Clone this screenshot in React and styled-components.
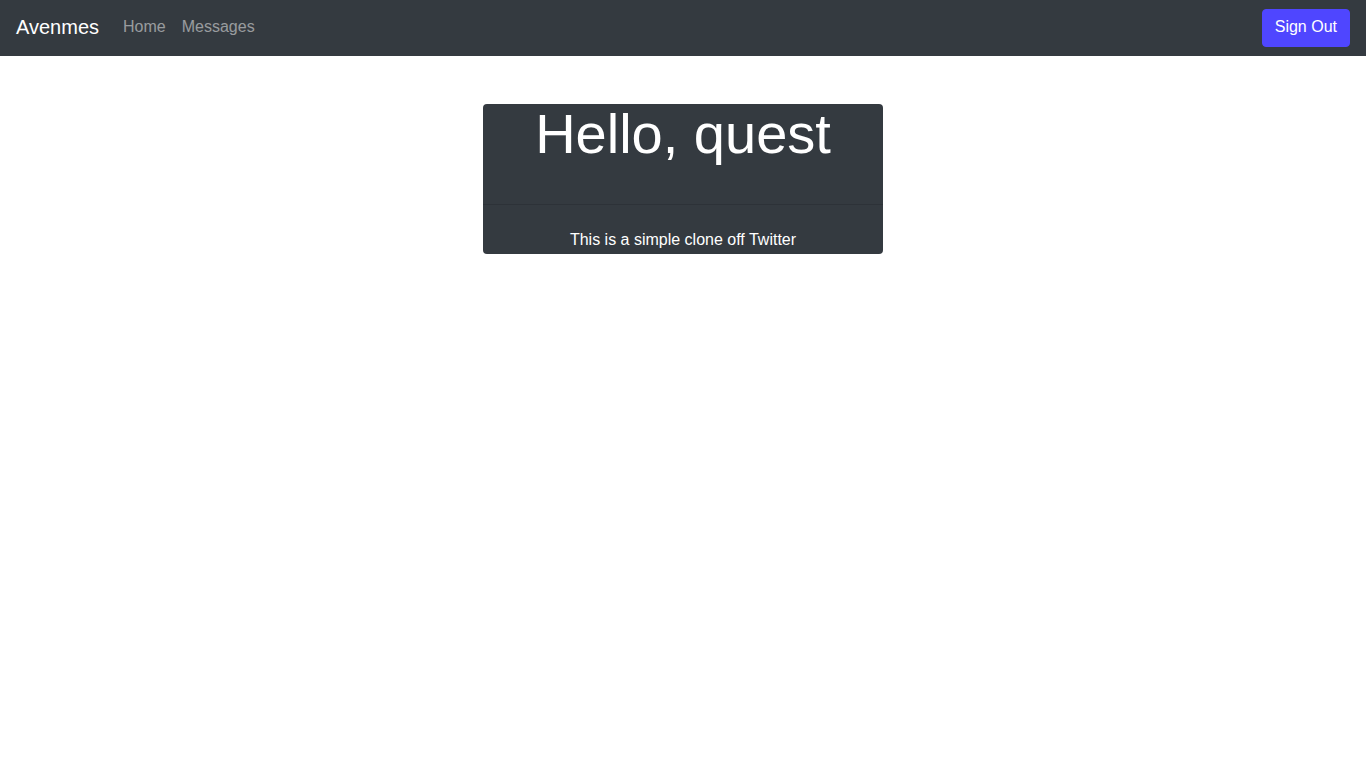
import React from 'react';
import styled, { createGlobalStyle } from 'styled-components';

const GlobalStyle = createGlobalStyle`
  body {
    margin: 0;
    font-family: "Liberation Sans", Arial, sans-serif;
    font-size: 16px;
    line-height: 1.5;
    color: #212529;
    background: #fff;
  }
  * { box-sizing: border-box; }
`;

const Navbar = styled.nav`
  height: 56px;
  padding: 0 16px;
  background-color: #343a40;
  display: flex;
  align-items: center;
`;

const Brand = styled.a`
  font-size: 20px;
  line-height: 30px;
  color: #fff;
  margin: 0 16px 2px 0;
  text-decoration: none;
`;

const NavLinks = styled.div`
  display: flex;
  flex: 1;
  margin-bottom: 2px;
`;

const NavLink = styled.a`
  padding: 8px;
  color: rgba(255, 255, 255, 0.5);
  text-decoration: none;
`;

const Button = styled.button`
  font-family: inherit;
  font-size: 16px;
  line-height: 24px;
  padding: 5px 12px 7px;
  border: 1px solid #4f46ff;
  border-radius: 4px;
  background-color: #4f46ff;
  color: #fff;
`;

const Card = styled.div`
  width: 400px;
  height: 150px;
  margin: 48px auto 0;
  background-color: #343a40;
  border-radius: 4px;
  color: #fff;
  text-align: center;
  display: flex;
  flex-direction: column;
`;

const CardHeader = styled.div`
  height: 101px;
  padding: 0 20px;
  border-bottom: 1px solid rgba(0, 0, 0, 0.125);
`;

const Title = styled.h1`
  margin: 0;
  font-size: 56px;
  font-weight: 400;
  line-height: 59px;
`;

const CardBody = styled.div`
  flex: 1;
  padding: 23px 20px 0;
`;

export default function App() {
  return (
    <>
      <GlobalStyle />
      <Navbar>
        <Brand href="#">Avenmes</Brand>
        <NavLinks>
          <NavLink href="#">Home</NavLink>
          <NavLink href="#">Messages</NavLink>
        </NavLinks>
        <Button>Sign Out</Button>
      </Navbar>
      <Card>
        <CardHeader>
          <Title>Hello, quest</Title>
        </CardHeader>
        <CardBody>This is a simple clone off Twitter</CardBody>
      </Card>
    </>
  );
}
